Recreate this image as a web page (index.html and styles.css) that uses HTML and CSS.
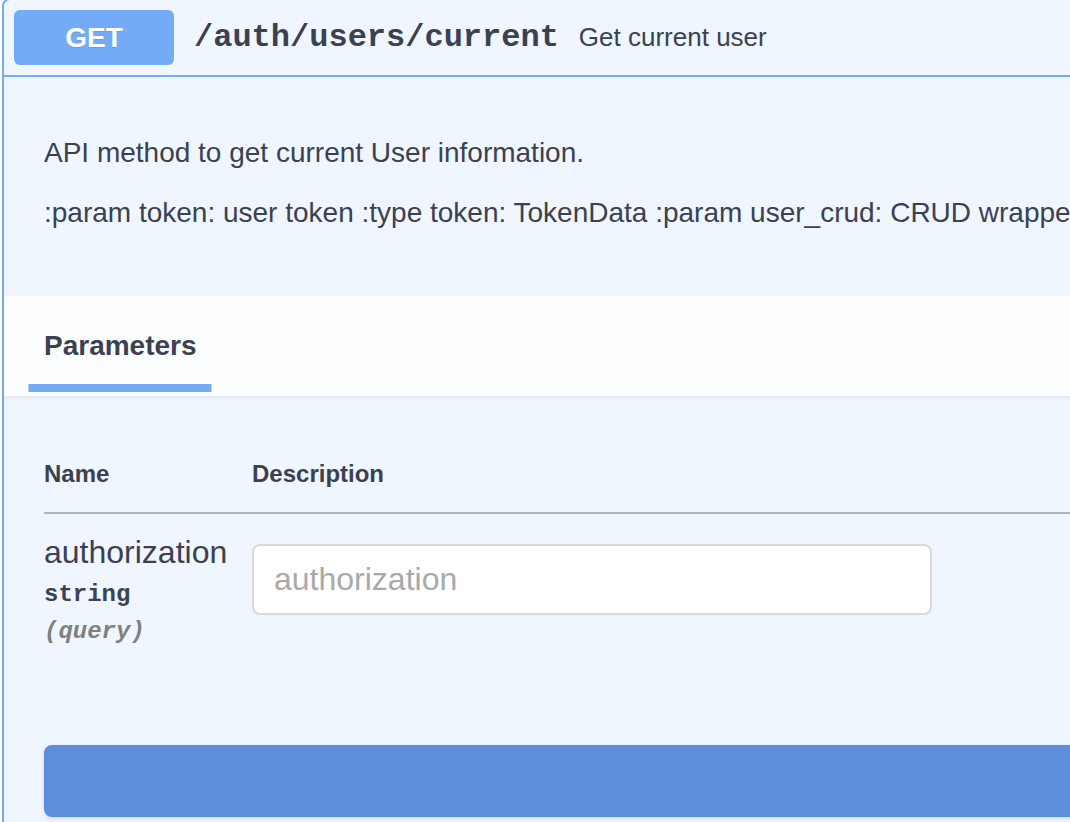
FILE: index.html
```html
<!DOCTYPE html>
<html>
<head>
<meta charset="utf-8">
<link rel="stylesheet" href="styles.css">
</head>
<body>
<div class="opblock">
  <div class="summary">
    <span class="method">GET</span>
    <span class="path">/auth/users/current</span>
    <span class="summary-desc">Get current user</span>
  </div>
  <div class="description">
    <p>API method to get current User information.</p>
    <p>:param token: user token :type token: TokenData :param user_crud: CRUD wrapper for the users table :type user_crud: UserCRUD</p>
  </div>
  <div class="section-header">
    <h4 class="tab"><span class="tab-label">Parameters</span></h4>
  </div>
  <div class="table-container">
    <table class="params">
      <thead>
        <tr>
          <th class="col-name">Name</th>
          <th class="col-desc">Description</th>
        </tr>
      </thead>
      <tbody>
        <tr>
          <td class="col-name">
            <div class="param-name">authorization</div>
            <div class="param-type">string</div>
            <div class="param-in">(query)</div>
          </td>
          <td class="col-desc">
            <input class="param-input" type="text" placeholder="authorization">
          </td>
        </tr>
      </tbody>
    </table>
  </div>
  <div class="execute-wrapper">
    <div class="execute"></div>
  </div>
</div>
</body>
</html>
```

FILE: styles.css
```css
html, body {
  margin: 0;
  padding: 0;
  background: #ffffff;
  overflow: hidden;
  width: 1070px;
  height: 822px;
}

body {
  font-family: "Liberation Sans", Arial, sans-serif;
  color: #3b4151;
}

.opblock {
  width: 1124px;
  box-sizing: border-box;
  margin: -2px 0 0 2px;
  border: 2px solid #73abf7;
  border-radius: 8px;
  background: #eff6fe;
}

.summary {
  display: flex;
  align-items: center;
  padding: 10px;
  border-bottom: 2px solid #73abf7;
}

.method {
  min-width: 160px;
  height: 55px;
  box-sizing: border-box;
  display: flex;
  align-items: center;
  justify-content: center;
  background: #73abf7;
  color: #ffffff;
  font-weight: 700;
  font-size: 28px;
  border-radius: 6px;
  text-shadow: 0 1px 0 rgba(0, 0, 0, 0.1);
}

.path {
  font-family: "Liberation Mono", "Courier New", monospace;
  font-weight: 700;
  font-size: 32px;
  padding: 0 20px;
  color: #3b4151;
}

.summary-desc {
  font-size: 26px;
  color: #3b4151;
  white-space: nowrap;
}

.description {
  padding: 32px 40px 39px;
}

.description p {
  margin: 28px 0;
  font-size: 28px;
  line-height: 32px;
  white-space: nowrap;
  overflow: hidden;
}

.section-header {
  display: flex;
  align-items: center;
  min-height: 100px;
  box-sizing: border-box;
  padding: 16px 40px;
  background: rgba(255, 255, 255, 0.8);
  box-shadow: 0 2px 4px rgba(0, 0, 0, 0.08);
}

.tab {
  margin: 0;
  font-size: 28px;
  font-weight: 700;
}

.tab-label {
  position: relative;
  display: inline-block;
}

.tab-label::after {
  content: "";
  position: absolute;
  left: 50%;
  bottom: -30px;
  width: 120%;
  height: 8px;
  transform: translateX(-50%);
  background: #73abf7;
}

.table-container {
  padding: 40px;
}

.params {
  width: 100%;
  border-collapse: collapse;
  border-spacing: 0;
}

.params th {
  text-align: left;
  font-size: 24px;
  font-weight: 700;
  padding: 24px 0;
  border-bottom: 2px solid #b0b4bd;
}

.params td {
  vertical-align: top;
  padding: 20px 20px 20px 0;
}

.col-name {
  width: 20%;
}

.param-name {
  font-size: 32px;
}

.param-type {
  font-family: "Liberation Mono", "Courier New", monospace;
  font-weight: 700;
  font-size: 24px;
  padding: 10px 0;
}

.param-in {
  font-family: "Liberation Mono", "Courier New", monospace;
  font-weight: 700;
  font-style: italic;
  font-size: 24px;
  color: #808080;
}

.param-input {
  display: block;
  width: 680px;
  box-sizing: border-box;
  margin: 10px 0;
  padding: 15px 20px;
  border: 2px solid #d9d9d9;
  border-radius: 8px;
  background: #ffffff;
  font-family: "Liberation Sans", Arial, sans-serif;
  font-size: 32px;
  color: #3b4151;
  outline: none;
}

.param-input::placeholder {
  color: #a9a9a9;
}

.execute-wrapper {
  padding: 40px;
}

.execute {
  height: 72px;
  border-radius: 8px;
  background: #5c8edb;
  box-shadow: 0 2px 4px rgba(0, 0, 0, 0.1);
}
```
